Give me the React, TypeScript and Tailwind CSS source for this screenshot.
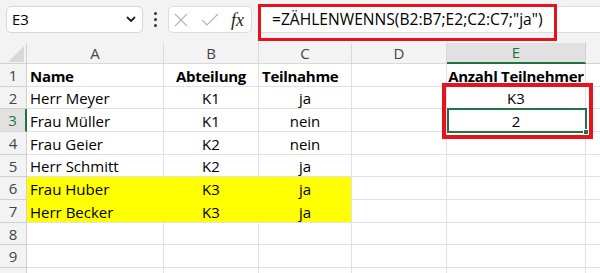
import React from "react";

const COLS = ["A", "B", "C", "D", "E"];
const rowHeights = [23, 22, 23, 23, 22, 23, 23, 22, 23, 23];

type Cell = { t?: string; b?: boolean; align?: "l" | "c" };
const data: Cell[][] = [
  [{ t: "Name", b: true, align: "l" }, { t: "Abteilung", b: true, align: "c" }, { t: "Teilnahme", b: true, align: "l" }, {}, { t: "Anzahl Teilnehmer", b: true, align: "c" }],
  [{ t: "Herr Meyer", align: "l" }, { t: "K1", align: "c" }, { t: "ja", align: "c" }, {}, { t: "K3", align: "c" }],
  [{ t: "Frau Müller", align: "l" }, { t: "K1", align: "c" }, { t: "nein", align: "c" }, {}, { t: "2", align: "c" }],
  [{ t: "Frau Geier", align: "l" }, { t: "K2", align: "c" }, { t: "nein", align: "c" }, {}, {}],
  [{ t: "Herr Schmitt", align: "l" }, { t: "K2", align: "c" }, { t: "ja", align: "c" }, {}, {}],
  [{ t: "Frau Huber", align: "l" }, { t: "K3", align: "c" }, { t: "ja", align: "c" }, {}, {}],
  [{ t: "Herr Becker", align: "l" }, { t: "K3", align: "c" }, { t: "ja", align: "c" }, {}, {}],
  [{}, {}, {}, {}, {}],
  [{}, {}, {}, {}, {}],
  [{}, {}, {}, {}, {}],
];

export default function App() {
  return (
    <div
      className="relative w-[600px] h-[273px] overflow-hidden bg-white text-black"
      style={{ fontFamily: "'Open Sans', 'Liberation Sans', sans-serif" }}
    >
      {/* top bar */}
      <div className="h-[43px] bg-[#f3f3f3] flex items-start pt-[6px] pl-[6px]">
        <div className="w-[137px] h-[27px] bg-white border border-[#d6d6d6] rounded-[5px] flex items-center justify-between pl-[5px] pr-[6px] text-[15px]">
          <span>E3</span>
          <svg width="10" height="7" viewBox="0 0 10 7">
            <path d="M1.5 1.5 L5 5 L8.5 1.5" fill="none" stroke="#222" strokeWidth="1.8" strokeLinecap="round" strokeLinejoin="round" />
          </svg>
        </div>
        <div className="w-[25px] h-[27px] flex flex-col items-center justify-center gap-[3px]">
          <div className="w-[3px] h-[3px] rounded-full bg-[#333]" />
          <div className="w-[3px] h-[3px] rounded-full bg-[#333]" />
          <div className="w-[3px] h-[3px] rounded-full bg-[#333]" />
        </div>
        <div className="w-[84px] h-[27px] bg-white border border-[#dcdcdc] rounded-[5px] flex items-center pl-[5px]">
          <svg width="14" height="14" viewBox="0 0 14 14">
            <path d="M1 1 L13 13 M13 1 L1 13" stroke="#b3b3b3" strokeWidth="1.1" />
          </svg>
          <svg width="18" height="14" viewBox="0 0 18 14" className="ml-[13px]">
            <path d="M1 7 L6 12 L17 1" fill="none" stroke="#b3b3b3" strokeWidth="1.1" />
          </svg>
          <span
            className="ml-[12px] text-[18px] italic text-[#222] leading-none"
            style={{ fontFamily: "'Liberation Serif', serif" }}
          >
            fx
          </span>
        </div>
        <div className="ml-[6px] flex-1 h-[27px] bg-white border-y border-l border-[#dcdcdc] flex items-center pl-[13px] text-[15.6px] whitespace-nowrap">
          =ZÄHLENWENNS(B2:B7;E2;C2:C7;"ja")
        </div>
      </div>

      {/* grid */}
      <div className="grid grid-cols-[27px_137px_95px_93px_95px_139px_1fr] text-[15px]">
        {/* header row */}
        <div className="h-[21px] bg-[#f3f3f3] border-r border-b border-[#d0d0d0] relative">
          <svg width="27" height="21" viewBox="0 0 27 21" className="absolute left-0 top-0">
            <path d="M24 3 L24 19 L8 19 Z" fill="#d9d9d9" />
          </svg>
        </div>
        {COLS.map((c) => (
          <div
            key={c}
            className={
              c === "E"
                ? "h-[21px] bg-[#e1e1e1] border-r border-[#d0d0d0] border-b-2 border-b-[#217346] text-[#217346] flex items-center justify-center"
                : "h-[21px] bg-[#f3f3f3] border-r border-b border-[#d9d9d9] text-[#444] flex items-center justify-center"
            }
          >
            {c}
          </div>
        ))}
        <div className="h-[21px] bg-[#f3f3f3] border-b border-[#d0d0d0]" />

        {data.map((row, ri) => {
          const h = rowHeights[ri];
          const rn = ri + 1;
          const yellow = rn === 6 || rn === 7;
          return (
            <React.Fragment key={ri}>
              <div
                className={
                  rn === 3
                    ? "bg-[#e1e1e1] border-r-2 border-r-[#217346] border-b border-b-[#d9d9d9] text-[#217346] flex items-center justify-center pt-[1px]"
                    : "bg-[#f3f3f3] border-r border-b border-[#d0d0d0] text-[#444] flex items-center justify-center pt-[1px]"
                }
                style={{ height: h }}
              >
                {rn < 10 ? rn : ""}
              </div>
              {row.map((cell, ci) => {
                const isYellowCell = yellow && ci < 3;
                let cls = "relative flex items-center whitespace-nowrap border-b border-r pt-[2px] ";
                if (isYellowCell) {
                  cls += "bg-[#ffff00] ";
                  cls += ci < 2 ? "border-r-[#ffff00] " : "border-r-[#e1e1e1] ";
                  cls += rn === 6 ? "border-b-[#ffff00] " : "border-b-[#e1e1e1] ";
                } else {
                  cls += "border-[#e1e1e1] ";
                }
                cls += cell.align === "c" ? "justify-center " : "justify-start pl-[3px] ";
                if (cell.b) cls += "font-bold tracking-[-0.3px] ";
                return (
                  <div key={ci} className={cls} style={{ height: h }}>
                    {cell.t}
                  </div>
                );
              })}
              <div className="border-b border-[#e1e1e1]" style={{ height: h }} />
            </React.Fragment>
          );
        })}
      </div>

      {/* selected cell E3 */}
      <div className="absolute left-[447px] top-[108px] w-[140px] h-[25px] border-2 border-[#217346] pointer-events-none">
        <div className="absolute right-[-4px] bottom-[-4px] w-[6px] h-[6px] bg-[#217346] border border-white" />
      </div>

      {/* red highlight boxes */}
      <div className="absolute left-[258px] top-[4px] w-[299px] h-[37px] border-[3px] border-[#e5131d]" />
      <div className="absolute left-[442px] top-[83px] w-[151px] h-[56px] border-[4px] border-[#e5131d]" />
    </div>
  );
}
